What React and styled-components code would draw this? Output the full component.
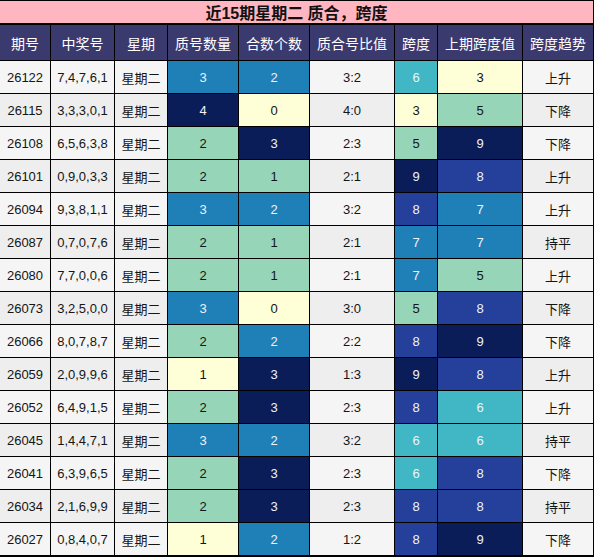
import React from "react";
import styled, { createGlobalStyle } from "styled-components";

const Global = createGlobalStyle`
  html, body { margin: 0; padding: 0; background: #ffffff; }
  body { font-family: "Liberation Sans", "Noto Sans CJK SC", sans-serif; }
`;

const COLS = "50px 63px 52px 70px 70px 84px 42px 84px 70px";

const Grid = styled.div`
  width: 594px;
  box-sizing: border-box;
  display: grid;
  grid-template-columns: ${COLS};
  column-gap: 1px;
  row-gap: 1px;
  background: #000;
  padding: 1px 1px 2px 0;
`;

const Title = styled.div`
  grid-column: 1 / -1;
  height: 22px;
  margin-bottom: 1px;
  background: #ffb6c1;
  display: flex;
  align-items: center;
  justify-content: center;
  font-size: 16px;
  font-weight: bold;
  color: #111;
`;

const Head = styled.div`
  height: 35px;
  background: #3b3a6e;
  color: #fff;
  font-size: 14px;
  display: flex;
  align-items: center;
  justify-content: center;
  white-space: nowrap;
`;

const Cell = styled.div`
  height: 32px;
  background: ${(p) => p.$bg};
  color: ${(p) => p.$fg};
  font-size: 13px;
  display: flex;
  align-items: center;
  justify-content: center;
  white-space: nowrap;
`;

const YELLOW = "#ffffd7";
const MINT = "#97d5b9";
const TEAL = "#41b6c4";
const BLUE = "#1f80b8";
const DBLUE = "#24409a";
const NAVY = "#0b1d59";
const DARK = "#151515";
const LIGHT = "#eef2f8";

const scale = {
  prime: { 1: YELLOW, 2: MINT, 3: BLUE, 4: NAVY },
  comp: { 0: YELLOW, 1: MINT, 2: BLUE, 3: NAVY },
  span: { 3: YELLOW, 5: MINT, 6: TEAL, 7: BLUE, 8: DBLUE, 9: NAVY },
};

const isDark = (c) => c === BLUE || c === DBLUE || c === NAVY || c === TEAL;

const headers = ["期号", "中奖号", "星期", "质号数量", "合数个数", "质合号比值", "跨度", "上期跨度值", "跨度趋势"];

const rows = [
  ["26122", "7,4,7,6,1", 3, 2, "3:2", 6, 3, "上升"],
  ["26115", "3,3,3,0,1", 4, 0, "4:0", 3, 5, "下降"],
  ["26108", "6,5,6,3,8", 2, 3, "2:3", 5, 9, "下降"],
  ["26101", "0,9,0,3,3", 2, 1, "2:1", 9, 8, "上升"],
  ["26094", "9,3,8,1,1", 3, 2, "3:2", 8, 7, "上升"],
  ["26087", "0,7,0,7,6", 2, 1, "2:1", 7, 7, "持平"],
  ["26080", "7,7,0,0,6", 2, 1, "2:1", 7, 5, "上升"],
  ["26073", "3,2,5,0,0", 3, 0, "3:0", 5, 8, "下降"],
  ["26066", "8,0,7,8,7", 2, 2, "2:2", 8, 9, "下降"],
  ["26059", "2,0,9,9,6", 1, 3, "1:3", 9, 8, "上升"],
  ["26052", "6,4,9,1,5", 2, 3, "2:3", 8, 6, "上升"],
  ["26045", "1,4,4,7,1", 3, 2, "3:2", 6, 6, "持平"],
  ["26041", "6,3,9,6,5", 2, 3, "2:3", 6, 8, "下降"],
  ["26034", "2,1,6,9,9", 2, 3, "2:3", 8, 8, "持平"],
  ["26027", "0,8,4,0,7", 1, 2, "1:2", 8, 9, "下降"],
];

function Colored({ value, map }) {
  const bg = map[value];
  return (
    <Cell $bg={bg} $fg={isDark(bg) && bg !== TEAL ? LIGHT : bg === TEAL ? "#e6f6f8" : DARK}>
      {value}
    </Cell>
  );
}

export default function App() {
  return (
    <>
      <Global />
      <Grid>
        <Title>近15期星期二 质合，跨度</Title>
        {headers.map((h) => (
          <Head key={h}>{h}</Head>
        ))}
        {rows.map((r, i) => {
          const plain = i % 2 === 0 ? "#f5f5f5" : "#eeeeee";
          return (
            <React.Fragment key={r[0]}>
              <Cell $bg={plain} $fg={DARK}>{r[0]}</Cell>
              <Cell $bg={plain} $fg={DARK}>{r[1]}</Cell>
              <Cell $bg={plain} $fg={DARK}>星期二</Cell>
              <Colored value={r[2]} map={scale.prime} />
              <Colored value={r[3]} map={scale.comp} />
              <Cell $bg={plain} $fg={DARK}>{r[4]}</Cell>
              <Colored value={r[5]} map={scale.span} />
              <Colored value={r[6]} map={scale.span} />
              <Cell $bg={plain} $fg={DARK}>{r[7]}</Cell>
            </React.Fragment>
          );
        })}
      </Grid>
    </>
  );
}
